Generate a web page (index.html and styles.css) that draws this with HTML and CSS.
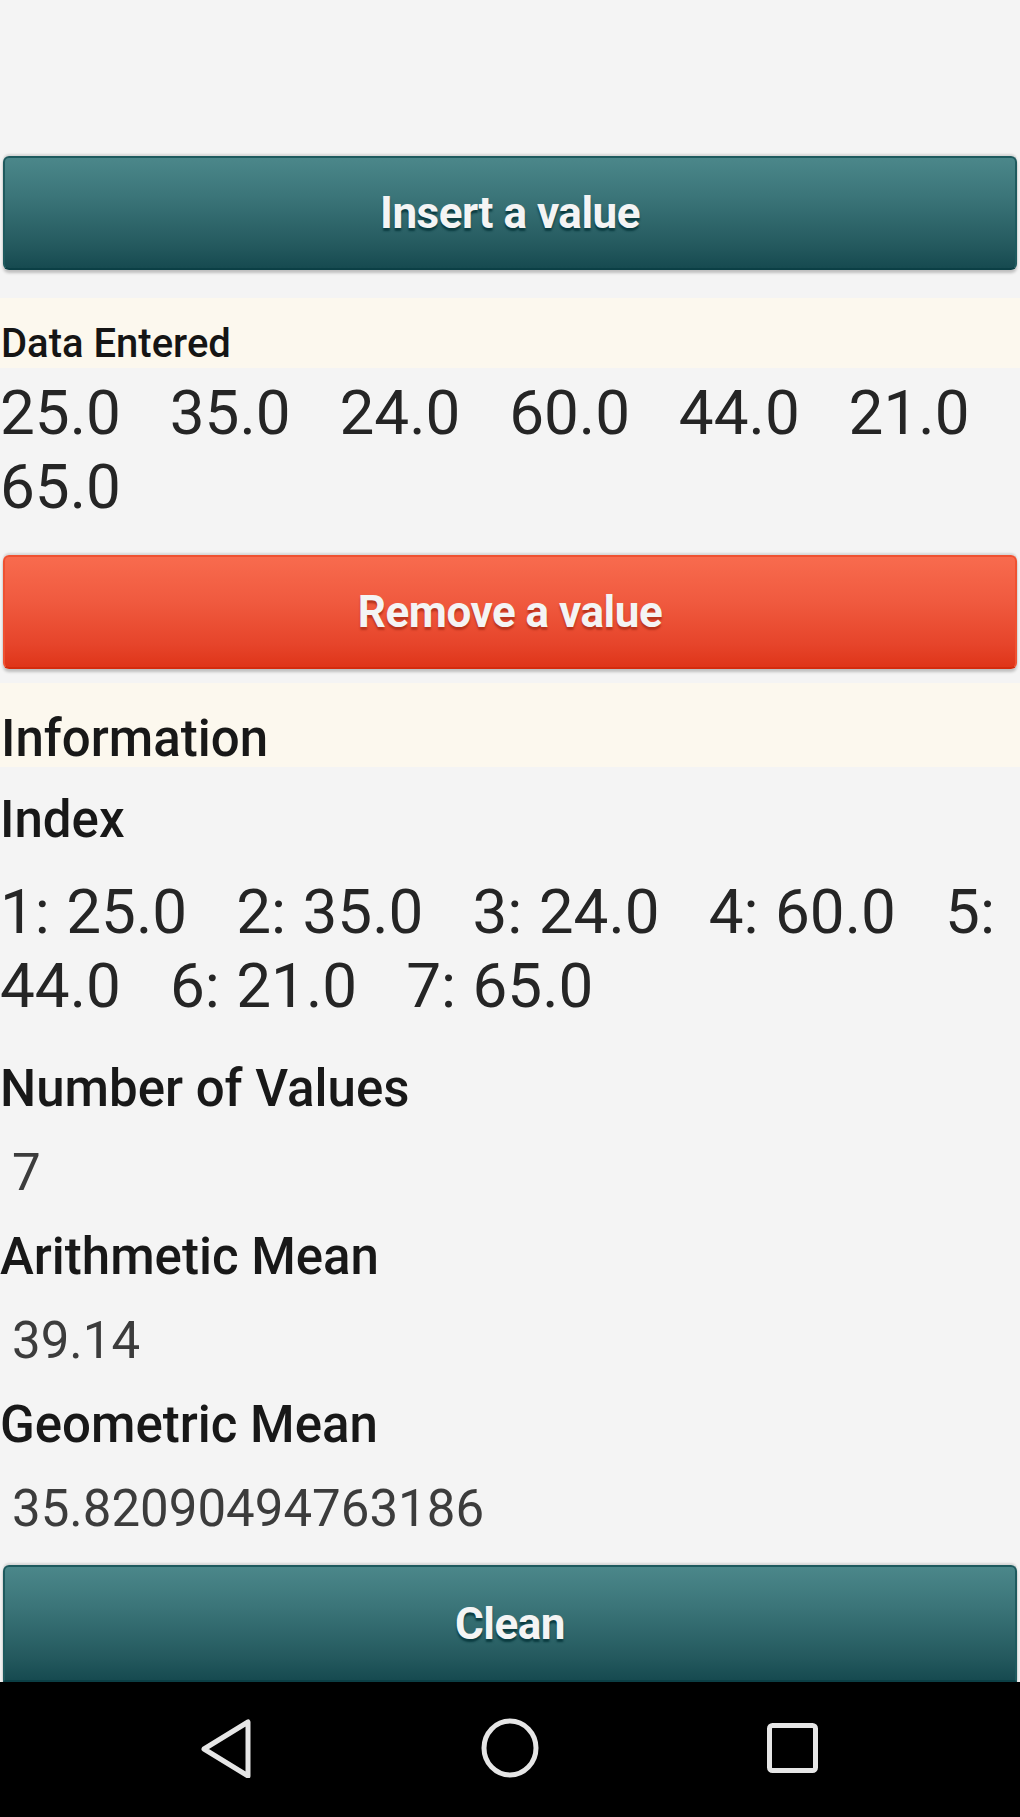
FILE: index.html
```html
<!DOCTYPE html>
<html lang="en">
<head>
<meta charset="utf-8">
<title>Mean Calculator</title>
<link rel="stylesheet" href="styles.css">
</head>
<body>
<div class="screen">
  <main class="content">
    <button class="btn btn-teal btn-insert" type="button">Insert a value</button>

    <div class="band band-small">Data Entered</div>
    <p class="data-values">25.0   35.0   24.0   60.0   44.0   21.0   65.0</p>

    <button class="btn btn-red btn-remove" type="button">Remove a value</button>

    <div class="band band-info">Information</div>
    <h2 class="label label-index">Index</h2>
    <p class="data-values index-values">1: 25.0   2: 35.0   3: 24.0   4: 60.0   5: 44.0   6: 21.0   7: 65.0</p>

    <h2 class="label label-first">Number of Values</h2>
    <p class="value">7</p>
    <h2 class="label">Arithmetic Mean</h2>
    <p class="value">39.14</p>
    <h2 class="label">Geometric Mean</h2>
    <p class="value">35.82090494763186</p>

    <button class="btn btn-teal btn-clean" type="button">Clean</button>
  </main>

  <nav class="navbar">
    <svg class="nav-icon" viewBox="0 0 60 60" width="60" height="60" aria-label="Back">
      <path d="M50 4 L50 58 L6 31 Z" fill="none" stroke="#e6e6e6" stroke-width="5" stroke-linejoin="round"/>
    </svg>
    <svg class="nav-icon" viewBox="0 0 60 60" width="60" height="60" aria-label="Home">
      <ellipse cx="30" cy="30" rx="26" ry="27" fill="none" stroke="#e6e6e6" stroke-width="5"/>
    </svg>
    <svg class="nav-icon" viewBox="0 0 60 60" width="60" height="60" aria-label="Recent">
      <rect x="7.5" y="7.5" width="46" height="45" rx="3" fill="none" stroke="#e6e6e6" stroke-width="5"/>
    </svg>
  </nav>
</div>
</body>
</html>
```

FILE: styles.css
```css
* {
  box-sizing: border-box;
}

html, body {
  margin: 0;
  padding: 0;
}

body {
  background: #f4f4f4;
  font-family: Roboto, "Liberation Sans", Arial, sans-serif;
  color: #1e1e1e;
}

.screen {
  width: 1020px;
  height: 1817px;
  display: flex;
  flex-direction: column;
  overflow: hidden;
}

.content {
  flex: 1;
  display: flex;
  flex-direction: column;
  padding-top: 156px;
  overflow: hidden;
}

.btn {
  display: block;
  flex-shrink: 0;
  margin: 0 3px;
  height: 114px;
  border-radius: 6px;
  font-family: Roboto, "Liberation Sans", Arial, sans-serif;
  font-weight: 700;
  font-size: 44px;
  color: #f4f4f4;
  letter-spacing: -0.5px;
  cursor: pointer;
  box-shadow: 0 -2px 2px rgba(0, 0, 0, 0.12), 0 3px 3px rgba(0, 0, 0, 0.22);
}

.btn-teal {
  background: linear-gradient(#4b878a 0%, #3b7579 35%, #24595e 80%, #164a50 100%);
  border: 2px solid #1e5a5e;
  border-bottom-color: #0b3f45;
  text-shadow: 0 3px 2px #0b3c41;
}

.btn-red {
  background: linear-gradient(#f86b4e 0%, #f05a3f 40%, #e6442a 80%, #df3519 100%);
  border: 2px solid #ef5131;
  border-bottom-color: #d42b0d;
  text-shadow: 0 3px 2px #b8341d;
}

.btn-clean {
  height: 117px;
  margin-top: 28px;
  border-bottom-left-radius: 0;
  border-bottom-right-radius: 0;
}

.band {
  background: #fcf8ee;
  flex-shrink: 0;
  padding-left: 1px;
}

.band-small {
  margin-top: 28px;
  height: 70px;
  padding-top: 22px;
  font-size: 40px;
  font-weight: 500;
  line-height: 47px;
  color: #151515;
}

.data-values {
  margin: 8px 0 0;
  font-size: 62px;
  line-height: 74px;
  white-space: pre-wrap;
  word-spacing: 0.9px;
  color: #252525;
}

.btn-remove {
  margin-top: 31px;
}

.band-info {
  margin-top: 14px;
  height: 84px;
  padding-top: 28px;
  font-size: 51px;
  font-weight: 500;
  line-height: 56px;
  color: #181818;
}

.label {
  margin: 28px 0 0;
  font-size: 51px;
  font-weight: 500;
  line-height: 56px;
  color: #181818;
}

.label-index {
  margin-top: 25px;
}

.index-values {
  margin-top: 27px;
  word-spacing: 1px;
}

.label-first {
  margin-top: 38px;
}

.value {
  margin: 28px 0 0;
  padding-left: 12px;
  font-size: 51px;
  line-height: 56px;
  color: #3c3c3c;
}

.navbar {
  flex-shrink: 0;
  height: 135px;
  background: #000;
  display: flex;
  align-items: center;
  justify-content: center;
  gap: 222px;
  padding-bottom: 4px;
}

.nav-icon {
  display: block;
}
```
